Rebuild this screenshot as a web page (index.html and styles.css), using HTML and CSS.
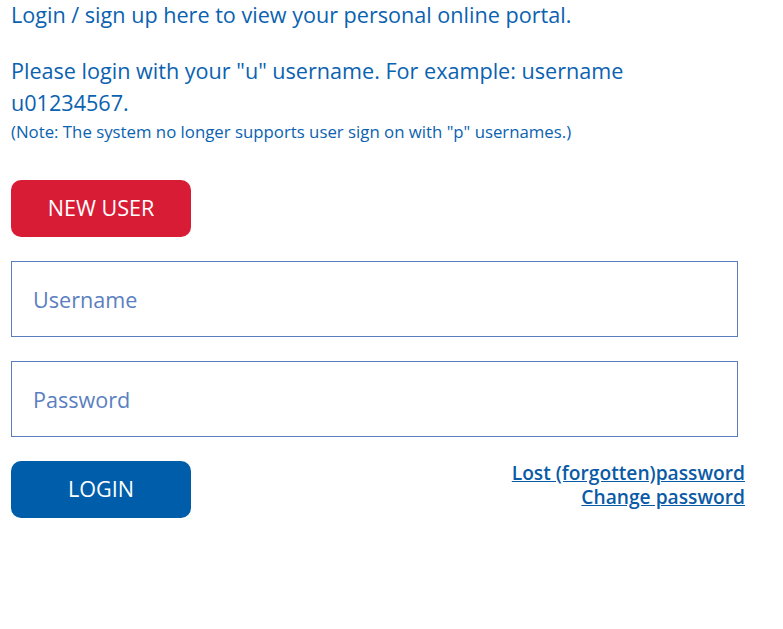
FILE: index.html
```html
<!DOCTYPE html>
<html lang="en">
<head>
  <meta charset="UTF-8" />
  <meta name="viewport" content="width=device-width, initial-scale=1.0" />
  <title>Portal Login</title>
  <link rel="stylesheet" href="styles.css">
</head>
<body>
  <div class="login-box">
    <p class="intro">Login / sign up here to view your personal online portal.</p>
    <p class="intro">Please login with your "u" username. For example: username u01234567.</p>
    <p class="note">(Note: The system no longer supports user sign on with "p" usernames.)</p>

    <button class="btn btn-red">NEW USER</button>

    <input class="field" type="text" placeholder="Username">
    <input class="field" type="password" placeholder="Password">

    <div class="login-row">
      <button class="btn btn-blue">LOGIN</button>
      <div class="links">
        <a href="#">Lost (forgotten)password</a>
        <a href="#">Change password</a>
      </div>
    </div>
  </div>
</body>
</html>
```

FILE: styles.css
```css
body {
  font-family: 'Open Sans', sans-serif;
  margin: 0;
  padding: 0;
  color: #0a62b0;
  background: white;
}
.login-box {
  width: 734px;
  padding: 0 11px;
  margin-top: -1px;
}
.intro {
  font-size: 21.6px;
  line-height: 32px;
  margin: 0 0 24px 0;
  width: 660px;
}
.intro + .intro {
  margin-bottom: 0;
}
.note {
  font-size: 16.8px;
  line-height: 24px;
  margin: 1px 0 36px 0;
}
.btn {
  display: block;
  width: 180px;
  height: 57px;
  padding: 0 0 2px 0;
  border: none;
  border-radius: 10px;
  color: white;
  font-family: 'Open Sans', sans-serif;
  font-size: 21.6px;
  cursor: pointer;
}
.btn-red {
  background-color: #d91c36;
  margin-bottom: 24px;
}
.btn-blue {
  background-color: #005daa;
}
.field {
  display: block;
  box-sizing: border-box;
  width: 99%;
  height: 76px;
  margin: 0 0 24px 0;
  padding: 0 21px;
  border: 1px solid #5a7dbf;
  font-family: 'Open Sans', sans-serif;
  font-size: 21.6px;
  color: #333;
}
.field::placeholder {
  color: #5b7fc0;
}
.login-row {
  display: flex;
  justify-content: space-between;
  align-items: flex-start;
}
.links {
  display: flex;
  flex-direction: column;
  align-items: flex-end;
}
.links a {
  color: #0a5aa5;
  font-size: 19.2px;
  font-weight: 600;
  line-height: 24px;
}
```
